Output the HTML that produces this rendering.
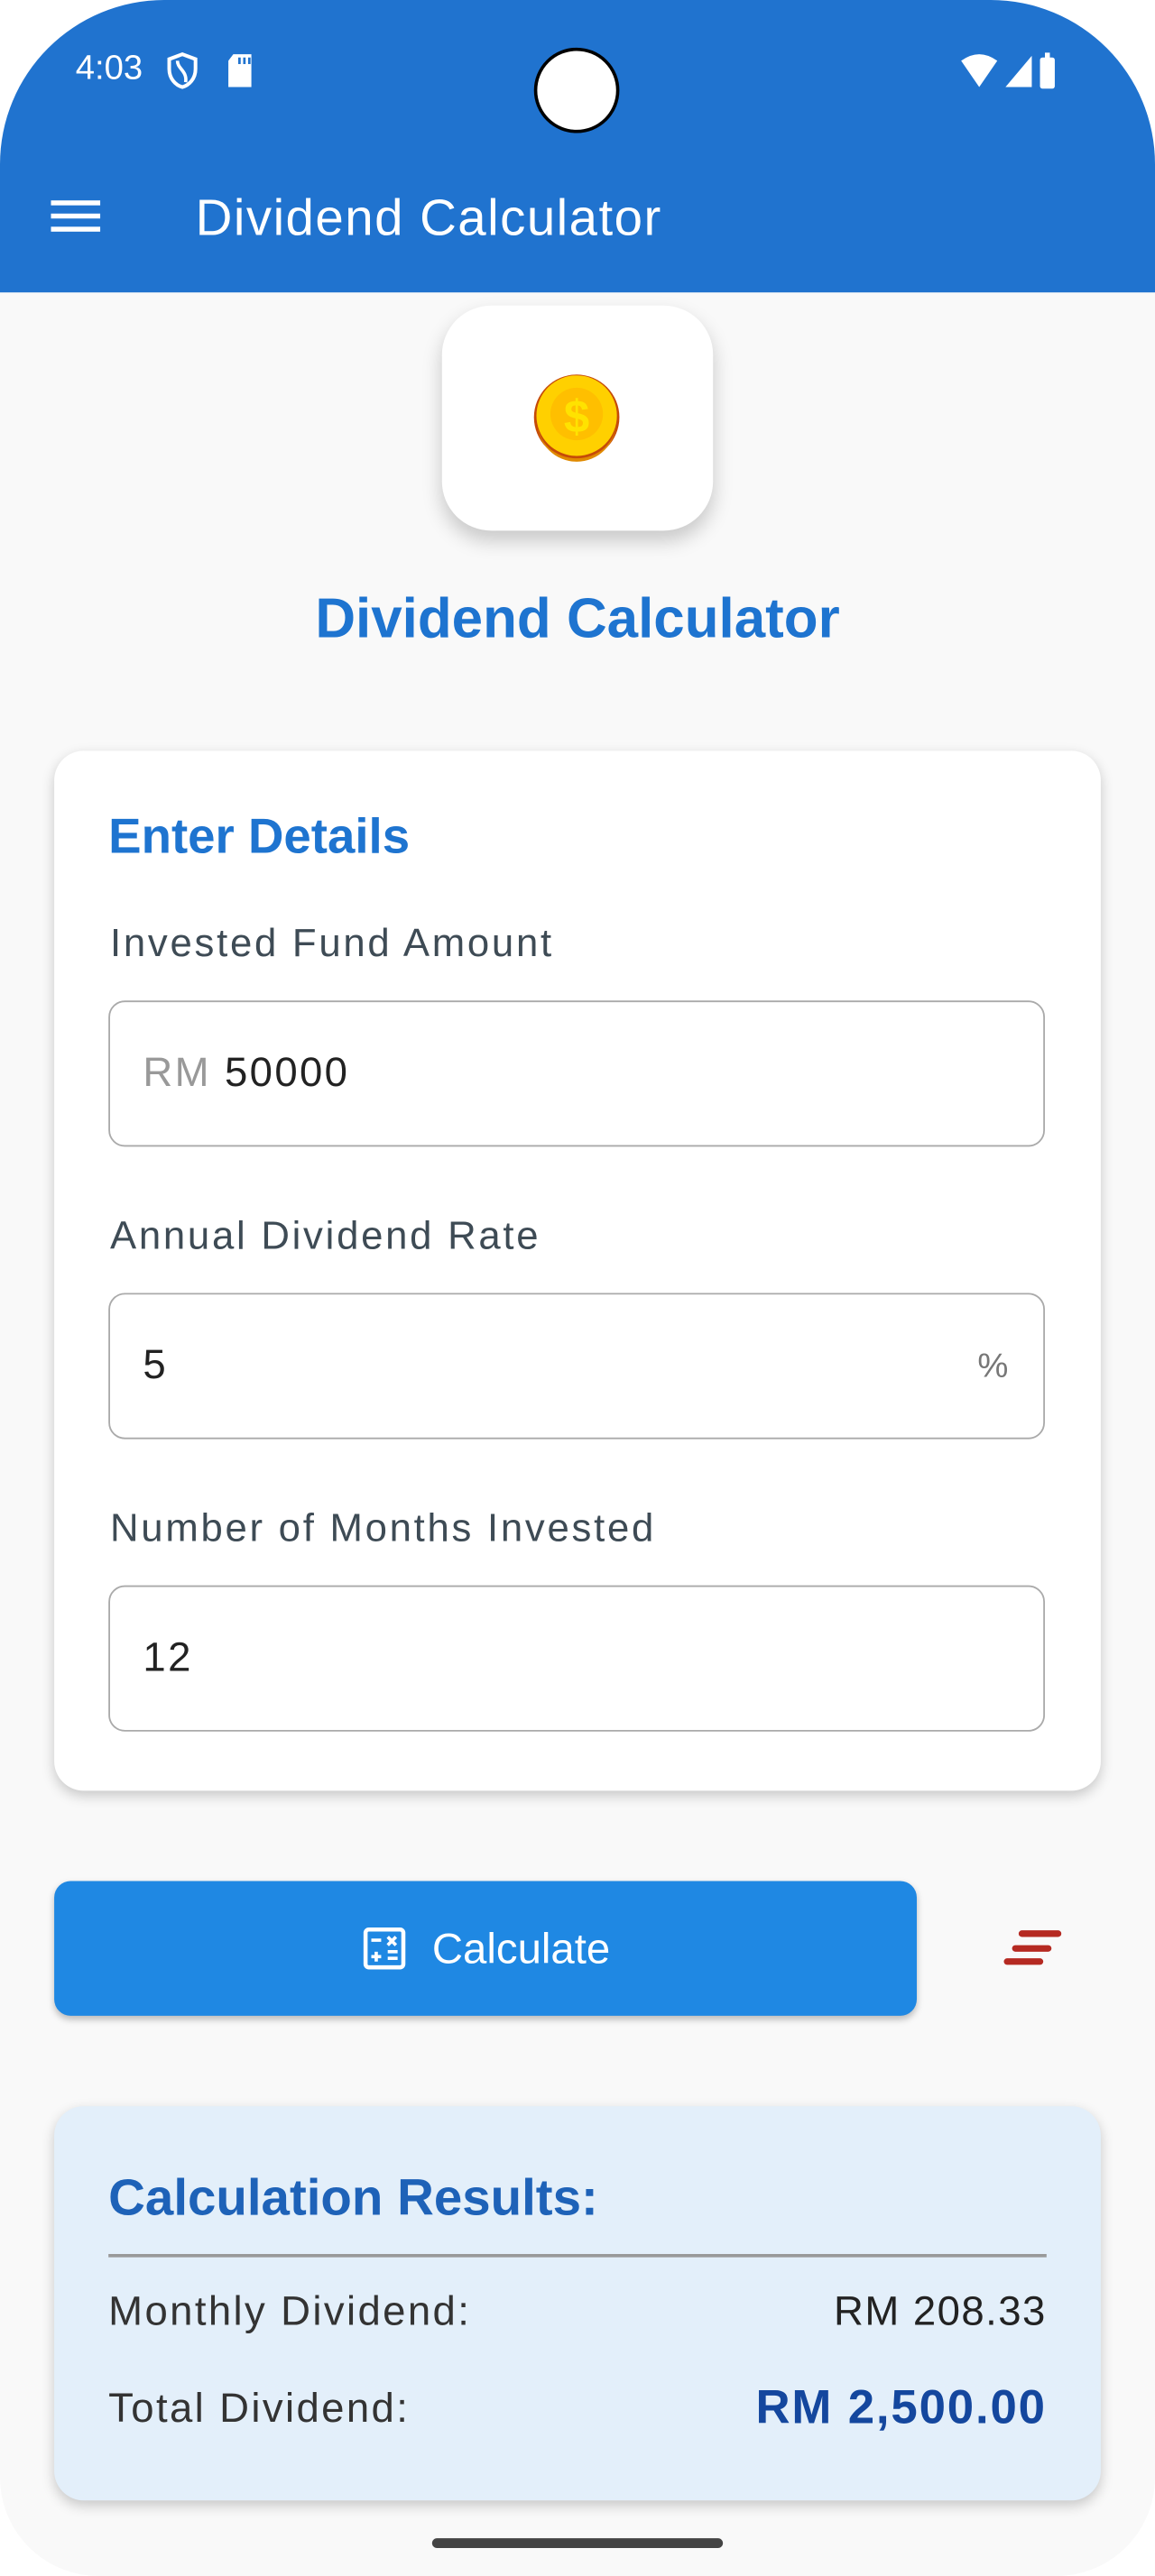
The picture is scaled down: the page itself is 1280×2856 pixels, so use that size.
<!DOCTYPE html>
<html><head><meta charset="utf-8"><style>
html,body{margin:0;padding:0;background:#fff;width:1280px;height:2856px;overflow:hidden}
#w{position:absolute;left:0;top:0;width:703px;height:1568px;transform:scale(1.820768,1.821429);transform-origin:0 0;font-family:"Liberation Sans",Roboto,sans-serif}
#phone{position:absolute;left:0;top:0;width:703px;height:1568px;background:#f9f9f9;border-radius:100px 100px 60px 60px;overflow:hidden}
.bar{position:absolute;left:0;top:0;width:703px;height:178px;background:#2073cf}
.abs{position:absolute}
.card{position:absolute;background:#fff;border-radius:18px;box-shadow:0 3px 8px rgba(0,0,0,.2)}
.lbl{position:absolute;left:34px;font-size:24px;color:#3e4b55;letter-spacing:1.5px}
.inp{position:absolute;left:33px;width:570px;height:89px;border:1.5px solid #aaa;border-radius:10px;box-sizing:border-box;font-size:25px;color:#222;line-height:87px;padding-left:20px;letter-spacing:1.3px}
</style></head><body><div id="w"><div id="phone">
<div class="bar"></div>
<div class="abs" style="left:46px;top:30px;color:#fff;font-size:21px">4:03</div>
<svg class="abs" style="left:100px;top:31px" width="22" height="24" viewBox="0 0 22 24"><path d="M11 2L3 5v6c0 6 4 10 8 11 4-1 8-5 8-11V5z" fill="none" stroke="#fff" stroke-width="2.2"/><path d="M8 6c0 5 6 6 5 13" fill="none" stroke="#fff" stroke-width="2"/></svg>
<svg class="abs" style="left:137px;top:32px" width="18" height="22"><path d="M5 1h11v20H2V5z" fill="#fff"/><rect x="8" y="3" width="1.5" height="4" fill="#2073cf"/><rect x="11" y="3" width="1.5" height="4" fill="#2073cf"/><rect x="14" y="3" width="1.5" height="4" fill="#2073cf"/></svg>
<div class="abs" style="left:325px;top:29px;width:52px;height:52px;border-radius:50%;background:#fff;border:2px solid #000;box-sizing:border-box"></div>
<svg class="abs" style="left:584px;top:32px" width="74" height="22"><path d="M1 5Q12-3 23 5L12 21z" fill="#fff"/><path d="M28 21L44 2v19z" fill="#fff"/><rect x="49" y="3" width="9" height="19" rx="1.5" fill="#fff"/><rect x="52" y="0" width="3" height="4" fill="#fff"/></svg>
<svg class="abs" style="left:31px;top:121px" width="32" height="22"><rect y="1" width="30" height="3" fill="#fff"/><rect y="9" width="30" height="3" fill="#fff"/><rect y="17" width="30" height="3" fill="#fff"/></svg>
<div class="abs" style="left:119px;top:115px;color:#fff;font-size:31px;letter-spacing:.8px">Dividend Calculator</div>

<div class="card" style="left:269px;top:186px;width:165px;height:137px;border-radius:30px;box-shadow:0 6px 12px rgba(0,0,0,.2)"></div>
<svg class="abs" style="left:324px;top:226px" width="54" height="56" viewBox="0 0 54 56"><circle cx="27" cy="28" r="26" fill="#c54a08"/><circle cx="27" cy="27" r="24.5" fill="#ffd000"/><path d="M3 31a24 24 0 0 0 48 0a24 22 0 0 1-48 0" fill="#e08a00"/><circle cx="27" cy="26" r="16" fill="#ffbf00"/><text x="27" y="37" text-anchor="middle" font-size="28" font-weight="bold" fill="#ffe200" font-family="Liberation Sans">$</text></svg>
<div class="abs" style="left:0;width:703px;top:358px;text-align:center;color:#1e74d0;font-size:34px;font-weight:bold">Dividend Calculator</div>

<div class="card" style="left:33px;top:457px;width:637px;height:633px">
<div class="abs" style="left:33px;top:36px;color:#1e74d0;font-size:30px;font-weight:bold">Enter Details</div>
<div class="lbl" style="top:104px">Invested Fund Amount</div>
<div class="inp" style="top:152px"><span style="color:#999">RM</span> 50000</div>
<div class="lbl" style="top:282px">Annual Dividend Rate</div>
<div class="inp" style="top:330px">5<span style="position:absolute;right:20px;color:#777;font-size:21px">%</span></div>
<div class="lbl" style="top:460px">Number of Months Invested</div>
<div class="inp" style="top:508px">12</div>
</div>

<div class="abs" style="left:33px;top:1145px;width:525px;height:82px;background:#1f88e3;border-radius:10px;box-shadow:0 2px 4px rgba(0,0,0,.25)"></div>
<svg class="abs" style="left:221px;top:1173px" width="26" height="26" viewBox="0 0 26 26"><rect x="1.5" y="1.5" width="23" height="23" rx="2" fill="none" stroke="#fff" stroke-width="2.5"/><path d="M5 8h6M8 15v6M5 18h6M15 15h6M15 19h6M15 6l5 5M20 6l-5 5" stroke="#fff" stroke-width="2"/></svg>
<div class="abs" style="left:263px;top:1171px;color:#fff;font-size:26px">Calculate</div>
<svg class="abs" style="left:609px;top:1174px" width="38" height="24"><path d="M13 3h22M9 12h20M4 20h20" stroke="#b52a22" stroke-width="4" stroke-linecap="round"/></svg>

<div class="card" style="left:33px;top:1282px;width:637px;height:240px;background:#e3effa">
<div class="abs" style="left:33px;top:38px;color:#1e62b8;font-size:31px;font-weight:bold">Calculation Results:</div>
<div class="abs" style="left:33px;top:90px;width:571px;height:1.5px;background:#999"></div>
<div class="abs" style="left:33px;top:111px;font-size:25px;color:#333;letter-spacing:1.3px">Monthly Dividend:</div>
<div class="abs" style="right:33px;top:111px;font-size:25px;color:#222;letter-spacing:.8px">RM 208.33</div>
<div class="abs" style="left:33px;top:170px;font-size:25px;color:#333;letter-spacing:1.3px">Total Dividend:</div>
<div class="abs" style="right:33px;top:168px;font-size:29px;color:#14479e;font-weight:bold;letter-spacing:1px">RM 2,500.00</div>
</div>
<div class="abs" style="left:263px;top:1545px;width:177px;height:6px;border-radius:3px;background:#444"></div>
</div></div></body></html>
